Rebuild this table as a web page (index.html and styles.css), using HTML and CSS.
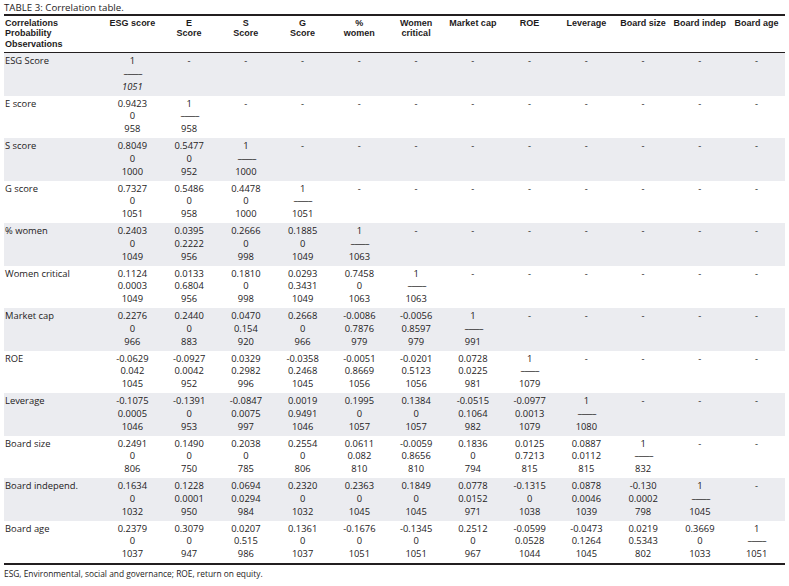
FILE: index.html
```html
<!DOCTYPE html>
<html>
<head>
<meta charset="utf-8">
<link rel="stylesheet" href="styles.css">
</head>
<body>
<div class="page">
  <div class="caption">TABLE 3: Correlation table.</div>
  <table class="corr">
    <colgroup>
      <col class="c-label">
      <col span="12" class="c-data">
    </colgroup>
    <thead>
      <tr>
        <th class="lab">Correlations<br>Probability<br>Observations</th>
        <th>ESG score</th>
        <th>E<br>Score</th>
        <th>S<br>Score</th>
        <th>G<br>Score</th>
        <th>%<br>women</th>
        <th>Women<br>critical</th>
        <th>Market cap</th>
        <th>ROE</th>
        <th>Leverage</th>
        <th>Board size</th>
        <th>Board indep</th>
        <th>Board age</th>
      </tr>
    </thead>
    <tbody>
      <tr class="alt">
        <td class="lab">ESG Score</td>
        <td>1<br><span class="sep">-----</span><br><em>1051</em></td>
        <td>-</td><td>-</td><td>-</td><td>-</td><td>-</td><td>-</td><td>-</td><td>-</td><td>-</td><td>-</td><td>-</td>
      </tr>
      <tr>
        <td class="lab">E score</td>
        <td>0.9423<br>0<br>958</td>
        <td>1<br><span class="sep">-----</span><br>958</td>
        <td>-</td><td>-</td><td>-</td><td>-</td><td>-</td><td>-</td><td>-</td><td>-</td><td>-</td><td>-</td>
      </tr>
      <tr class="alt">
        <td class="lab">S score</td>
        <td>0.8049<br>0<br>1000</td>
        <td>0.5477<br>0<br>952</td>
        <td>1<br><span class="sep">-----</span><br>1000</td>
        <td>-</td><td>-</td><td>-</td><td>-</td><td>-</td><td>-</td><td>-</td><td>-</td><td>-</td>
      </tr>
      <tr>
        <td class="lab">G score</td>
        <td>0.7327<br>0<br>1051</td>
        <td>0.5486<br>0<br>958</td>
        <td>0.4478<br>0<br>1000</td>
        <td>1<br><span class="sep">-----</span><br>1051</td>
        <td>-</td><td>-</td><td>-</td><td>-</td><td>-</td><td>-</td><td>-</td><td>-</td>
      </tr>
      <tr class="alt">
        <td class="lab">% women</td>
        <td>0.2403<br>0<br>1049</td>
        <td>0.0395<br>0.2222<br>956</td>
        <td>0.2666<br>0<br>998</td>
        <td>0.1885<br>0<br>1049</td>
        <td>1<br><span class="sep">-----</span><br>1063</td>
        <td>-</td><td>-</td><td>-</td><td>-</td><td>-</td><td>-</td><td>-</td>
      </tr>
      <tr>
        <td class="lab">Women critical</td>
        <td>0.1124<br>0.0003<br>1049</td>
        <td>0.0133<br>0.6804<br>956</td>
        <td>0.1810<br>0<br>998</td>
        <td>0.0293<br>0.3431<br>1049</td>
        <td>0.7458<br>0<br>1063</td>
        <td>1<br><span class="sep">-----</span><br>1063</td>
        <td>-</td><td>-</td><td>-</td><td>-</td><td>-</td><td>-</td>
      </tr>
      <tr class="alt">
        <td class="lab">Market cap</td>
        <td>0.2276<br>0<br>966</td>
        <td>0.2440<br>0<br>883</td>
        <td>0.0470<br>0.154<br>920</td>
        <td>0.2668<br>0<br>966</td>
        <td>-0.0086<br>0.7876<br>979</td>
        <td>-0.0056<br>0.8597<br>979</td>
        <td>1<br><span class="sep">-----</span><br>991</td>
        <td>-</td><td>-</td><td>-</td><td>-</td><td>-</td>
      </tr>
      <tr>
        <td class="lab">ROE</td>
        <td>-0.0629<br>0.042<br>1045</td>
        <td>-0.0927<br>0.0042<br>952</td>
        <td>0.0329<br>0.2982<br>996</td>
        <td>-0.0358<br>0.2468<br>1045</td>
        <td>-0.0051<br>0.8669<br>1056</td>
        <td>-0.0201<br>0.5123<br>1056</td>
        <td>0.0728<br>0.0225<br>981</td>
        <td>1<br><span class="sep">-----</span><br>1079</td>
        <td>-</td><td>-</td><td>-</td><td>-</td>
      </tr>
      <tr class="alt">
        <td class="lab">Leverage</td>
        <td>-0.1075<br>0.0005<br>1046</td>
        <td>-0.1391<br>0<br>953</td>
        <td>-0.0847<br>0.0075<br>997</td>
        <td>0.0019<br>0.9491<br>1046</td>
        <td>0.1995<br>0<br>1057</td>
        <td>0.1384<br>0<br>1057</td>
        <td>-0.0515<br>0.1064<br>982</td>
        <td>-0.0977<br>0.0013<br>1079</td>
        <td>1<br><span class="sep">-----</span><br>1080</td>
        <td>-</td><td>-</td><td>-</td>
      </tr>
      <tr>
        <td class="lab">Board size</td>
        <td>0.2491<br>0<br>806</td>
        <td>0.1490<br>0<br>750</td>
        <td>0.2038<br>0<br>785</td>
        <td>0.2554<br>0<br>806</td>
        <td>0.0611<br>0.082<br>810</td>
        <td>-0.0059<br>0.8656<br>810</td>
        <td>0.1836<br>0<br>794</td>
        <td>0.0125<br>0.7213<br>815</td>
        <td>0.0887<br>0.0112<br>815</td>
        <td>1<br><span class="sep">-----</span><br>832</td>
        <td>-</td><td>-</td>
      </tr>
      <tr class="alt">
        <td class="lab">Board independ.</td>
        <td>0.1634<br>0<br>1032</td>
        <td>0.1228<br>0.0001<br>950</td>
        <td>0.0694<br>0.0294<br>984</td>
        <td>0.2320<br>0<br>1032</td>
        <td>0.2363<br>0<br>1045</td>
        <td>0.1849<br>0<br>1045</td>
        <td>0.0778<br>0.0152<br>971</td>
        <td>-0.1315<br>0<br>1038</td>
        <td>0.0878<br>0.0046<br>1039</td>
        <td>-0.130<br>0.0002<br>798</td>
        <td>1<br><span class="sep">-----</span><br>1045</td>
        <td>-</td>
      </tr>
      <tr>
        <td class="lab">Board age</td>
        <td>0.2379<br>0<br>1037</td>
        <td>0.3079<br>0<br>947</td>
        <td>0.0207<br>0.515<br>986</td>
        <td>0.1361<br>0<br>1037</td>
        <td>-0.1676<br>0<br>1051</td>
        <td>-0.1345<br>0<br>1051</td>
        <td>0.2512<br>0<br>967</td>
        <td>-0.0599<br>0.0528<br>1044</td>
        <td>-0.0473<br>0.1264<br>1045</td>
        <td>0.0219<br>0.5343<br>802</td>
        <td>0.3669<br>0<br>1033</td>
        <td>1<br><span class="sep">-----</span><br>1051</td>
      </tr>
    </tbody>
  </table>
  <div class="note">ESG, Environmental, social and governance; ROE, return on equity.</div>
</div>
</body>
</html>
```

FILE: styles.css
```css
html, body {
  margin: 0;
  padding: 0;
  background: #ffffff;
}

.page {
  padding: 1px 4px 0 4px;
  font-family: "Open Sans", "Noto Sans", sans-serif;
  color: #1e1b1c;
}

.caption {
  font-size: 9.7px;
  line-height: 13px;
}

.corr {
  width: 781px;
  table-layout: fixed;
  border-collapse: collapse;
  border-top: 2px solid #231f20;
  border-bottom: 2px solid #231f20;
  font-size: 9.4px;
}

.c-label {
  width: 100px;
}

.corr th {
  font-family: "Liberation Sans", Arial, sans-serif;
  font-size: 9px;
  font-weight: 700;
  line-height: 10.4px;
  padding: 2px 0 3px 0;
  text-align: center;
  vertical-align: top;
  white-space: nowrap;
  border-bottom: 1px solid #231f20;
}

.corr th.lab {
  text-align: left;
  padding-left: 1px;
}

.corr td {
  line-height: 12.75px;
  padding: 2px 0 2.25px 0;
  text-align: center;
  vertical-align: top;
  white-space: nowrap;
}

.corr td.lab {
  text-align: left;
  padding-left: 1px;
}

.corr tr.alt td {
  background: #ebecf0;
}

.corr em {
  font-style: italic;
}

.sep {
  display: inline-block;
  letter-spacing: -0.9px;
  transform: scaleX(1.7);
}

.note {
  margin-top: 3px;
  font-size: 8.4px;
  line-height: 12px;
}
```
